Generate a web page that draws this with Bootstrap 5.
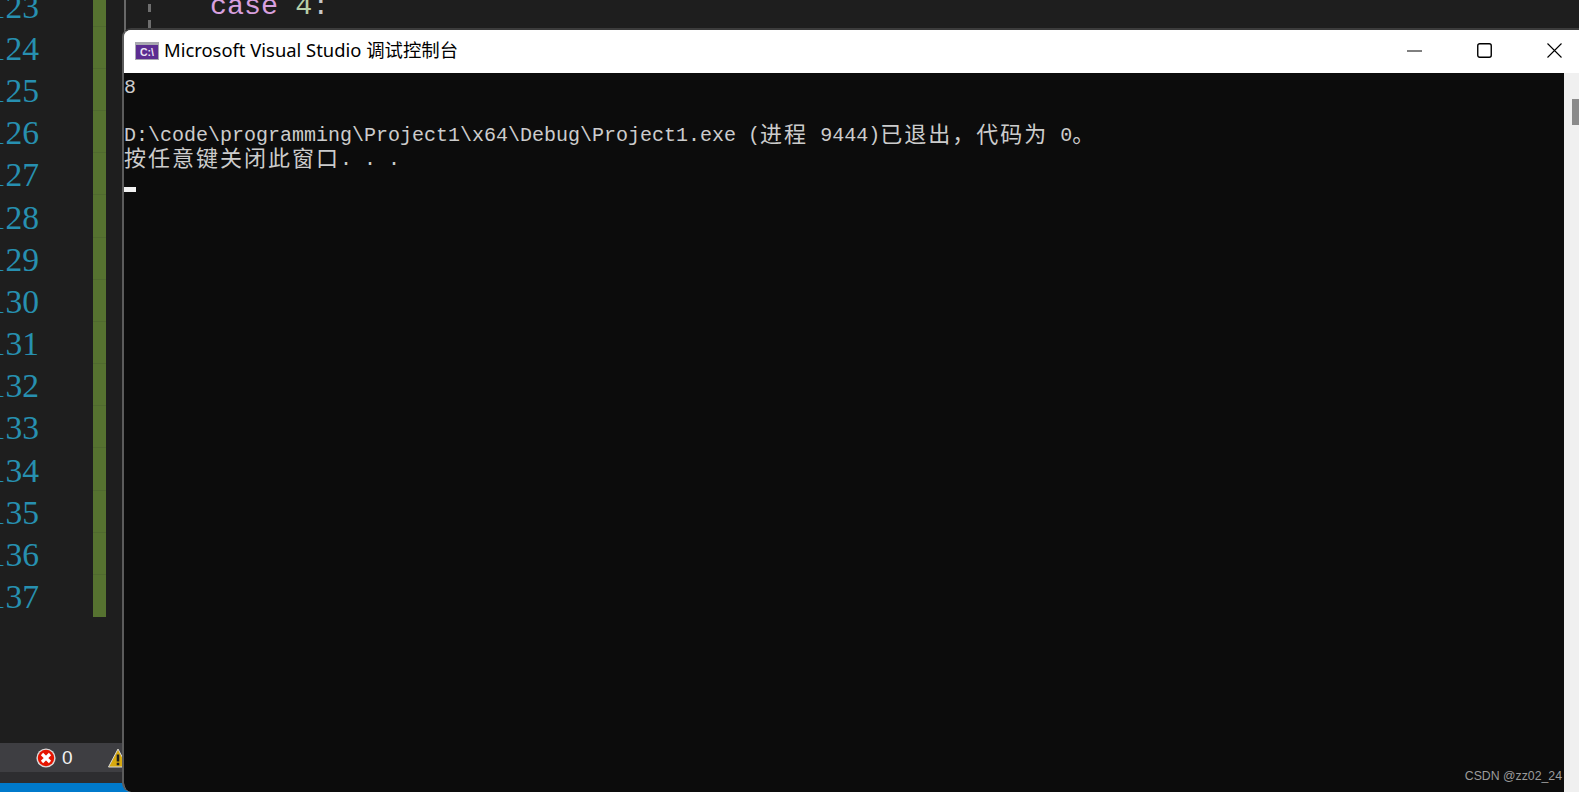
<!DOCTYPE html>
<html lang="zh">
<head>
<meta charset="utf-8">
<title>Microsoft Visual Studio 调试控制台</title>
<link href="https://cdn.jsdelivr.net/npm/bootstrap@5.3.0/dist/css/bootstrap.min.css" rel="stylesheet">
<style>
html,body{height:100%;overflow:hidden;background:#1e1e1e}
.ide{width:1579px;height:792px;background:#1e1e1e;overflow:hidden}
.ide-main{flex:1 1 auto;min-height:0}
.gutter{width:93px;margin-top:-14.4px;flex:none}
.ln{height:42.2px;font:33.6px/42.2px "Liberation Serif",serif;color:#2790b0;padding-right:54px;white-space:nowrap}
.greenbar{width:13px;flex:none;height:617px;background:#567230}
.seg{height:42.2px;border-top:1px solid #50692f}
.seg:first-child{height:25.6px;border-top:0}
.codearea{margin-left:18px;border-left:2px solid #686868;padding-left:22px;flex:1 1 auto}
.guide{width:3px;height:26px;margin-top:4px;background:repeating-linear-gradient(#6e6e6e 0 8px,transparent 8px 16px);flex:none}
.codeline{font:28.4px/30px "Liberation Mono",monospace;margin-left:59px;margin-top:-8px;white-space:pre}
.kw{color:#d8a0df}.num{color:#b5cea8}.pun{color:#c8c8c8}
.errbar{height:29px;background:#3e3e42;padding-left:36px;font:19px "Liberation Sans",sans-serif;color:#f1f1f1}
.errbar .cnt{margin-left:6px;margin-right:35px}
.subbar{height:11px;background:#2d2d30}
.bluebar{height:9px;background:#007acc}
.conwin{position:absolute;left:122px;top:28px;width:1457px;height:764px;background:#fff;border-left:2px solid #5c5c5c;border-top:2px solid #3c3c3c;border-radius:9px 0 0 9px;overflow:hidden}
.titlebar{height:43px;background:#fff;color:#000;font:18.4px "Noto Sans","Noto Sans CJK SC",sans-serif;padding-left:11px;padding-bottom:2px}
.titletext{margin-left:5px;margin-bottom:3px;white-space:nowrap}
.wbtn{width:70px;height:41px;background:none;border:0;padding:0}
.winbtns{margin-right:-10px}
.conbody{flex:1 1 auto;min-height:0}
.console{flex:1 1 auto;background:#0c0c0c;color:#cccccc;font:20px/30px "Liberation Mono",monospace;position:relative}
.cl{height:24px;white-space:pre}
.cj{font:22px/22px "Noto Sans CJK SC",sans-serif;letter-spacing:2px;vertical-align:top}
.cursor{width:12px;height:5px;background:#f2f2f2;margin-top:18px}
.sbar{width:15px;background:#f0f0f0;flex:none;padding-top:26px}
.sthumb{width:7px;height:26px;background:#8b8b8b;margin-left:8px}
.wmark{position:absolute;right:2px;bottom:8px;font:12.3px/16px "Liberation Sans",sans-serif;color:#9b9b9b}
</style>
</head>
<body>
<div class="ide d-flex flex-column">
  <div class="ide-main d-flex overflow-hidden">
    <div class="gutter">
      <div class="ln d-flex justify-content-end">123</div><div class="ln d-flex justify-content-end">124</div><div class="ln d-flex justify-content-end">125</div><div class="ln d-flex justify-content-end">126</div><div class="ln d-flex justify-content-end">127</div>
      <div class="ln d-flex justify-content-end">128</div><div class="ln d-flex justify-content-end">129</div><div class="ln d-flex justify-content-end">130</div><div class="ln d-flex justify-content-end">131</div><div class="ln d-flex justify-content-end">132</div>
      <div class="ln d-flex justify-content-end">133</div><div class="ln d-flex justify-content-end">134</div><div class="ln d-flex justify-content-end">135</div><div class="ln d-flex justify-content-end">136</div><div class="ln d-flex justify-content-end">137</div>
    </div>
    <div class="greenbar">
      <div class="seg"></div><div class="seg"></div><div class="seg"></div><div class="seg"></div><div class="seg"></div>
      <div class="seg"></div><div class="seg"></div><div class="seg"></div><div class="seg"></div><div class="seg"></div>
      <div class="seg"></div><div class="seg"></div><div class="seg"></div><div class="seg"></div><div class="seg"></div>
    </div>
    <div class="codearea d-flex">
      <div class="guide"></div>
      <div class="codeline"><span class="kw">case</span> <span class="num">4</span><span class="pun">:</span></div>
    </div>
  </div>
  <div class="errbar d-flex align-items-center flex-shrink-0">
    <svg width="20" height="20" viewBox="0 0 20 20"><circle cx="10" cy="10" r="9.6" fill="#dcdcdc"/><circle cx="10" cy="10" r="8.2" fill="#e51400"/><path d="M6 6l8 8M14 6l-8 8" stroke="#fff" stroke-width="3.2"/></svg>
    <span class="cnt">0</span>
    <svg width="20" height="20" viewBox="0 0 20 20"><path d="M10 1L19.5 19H.5z" fill="#d7a90f" stroke="#d8d8d8" stroke-width="1" stroke-linejoin="round"/><path d="M10 6.5v7M10 14.8v2.4" stroke="#1e1e1e" stroke-width="2.6"/></svg>
  </div>
  <div class="subbar"></div>
  <div class="bluebar"></div>
</div>

<div class="conwin d-flex flex-column">
  <div class="titlebar d-flex align-items-center flex-shrink-0">
    <svg width="24" height="18" viewBox="0 0 24 18" class="flex-shrink-0"><rect width="24" height="18" fill="#a8a8b0"/><rect x="1" y="3" width="22" height="14" fill="#5c2d91"/><text x="12" y="14" text-anchor="middle" font-family="Liberation Sans, sans-serif" font-size="10.5" font-weight="700" fill="#ece6f4">C:\</text></svg>
    <span class="titletext">Microsoft Visual Studio 调试控制台</span>
    <div class="ms-auto d-flex winbtns">
      <button class="wbtn d-flex align-items-center justify-content-center" aria-label="最小化"><svg width="15" height="2" viewBox="0 0 15 2"><path d="M0 1h15" stroke="#000" stroke-width="1"/></svg></button>
      <button class="wbtn d-flex align-items-center justify-content-center" aria-label="最大化"><svg width="15" height="15" viewBox="0 0 15 15"><rect x=".75" y=".75" width="13.5" height="13.5" rx="2" fill="none" stroke="#000" stroke-width="1.4"/></svg></button>
      <button class="wbtn d-flex align-items-center justify-content-center" aria-label="关闭"><svg width="15" height="15" viewBox="0 0 15 15"><path d="M.5.5l14 14M14.5.5l-14 14" stroke="#000" stroke-width="1.1"/></svg></button>
    </div>
  </div>
  <div class="conbody d-flex">
    <div class="console">
      <div class="cl">8</div>
      <div class="cl"></div>
      <div class="cl">D:\code\programming\Project1\x64\Debug\Project1.exe (<span class="cj">进程</span> 9444)<span class="cj">已退出，代码为</span> 0<span class="cj">。</span></div>
      <div class="cl"><span class="cj">按任意键关闭此窗口</span>. . .</div>
      <div class="cl"><div class="cursor"></div></div>
      <div class="wmark">CSDN @zz02_24</div>
    </div>
    <div class="sbar"><div class="sthumb"></div></div>
  </div>
</div>
</body>
</html>
